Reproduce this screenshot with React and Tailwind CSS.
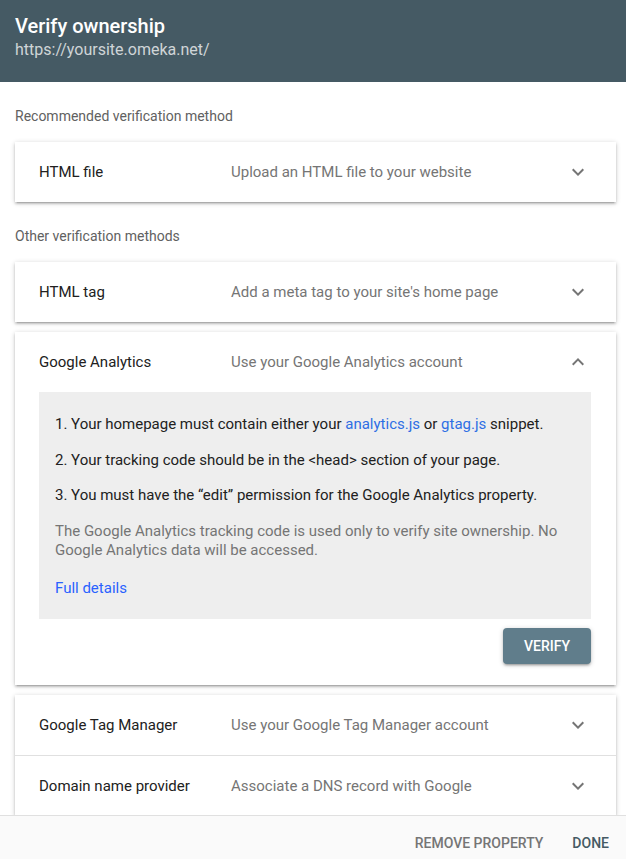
import React from "react";

const shadow =
  "shadow-[0_2px_2px_0_rgba(0,0,0,0.14),0_3px_1px_-2px_rgba(0,0,0,0.12),0_1px_5px_0_rgba(0,0,0,0.2)]";

function ExpandMore() {
  return (
    <svg width="24" height="24" viewBox="0 0 24 24" fill="#757575">
      <path d="M16.59 8.59L12 13.17 7.41 8.59 6 10l6 6 6-6z" />
    </svg>
  );
}
function ExpandLess() {
  return (
    <svg width="24" height="24" viewBox="0 0 24 24" fill="#757575">
      <path d="M12 8l-6 6 1.41 1.41L12 10.83l4.59 4.58L18 14z" />
    </svg>
  );
}

function Row({ title, desc, open }) {
  return (
    <div className="flex h-[60px] items-center pl-6 pr-[26px]">
      <div className="w-[192px] shrink-0 text-[15px] text-[#212121]">{title}</div>
      <div className="flex-1 text-[15px] text-[#757575]">{desc}</div>
      {open ? <ExpandLess /> : <ExpandMore />}
    </div>
  );
}

export default function App() {
  return (
    <div
      className="flex h-[859px] flex-col overflow-hidden bg-white"
      style={{ fontFamily: "Roboto, 'Noto Sans', sans-serif" }}
    >
      <header className="h-[82px] shrink-0 bg-[#455a64] px-[15px] pt-[13px]">
        <div className="text-[20px] font-medium leading-[26px] text-white">Verify ownership</div>
        <div className="text-[16px] leading-[22px] text-white/75">https://yoursite.omeka.net/</div>
      </header>

      <main className="flex-1 overflow-hidden pl-[15px] pr-[10px]">
        <div className="pt-6 pb-4 text-[14px] leading-5 text-[#616161]">
          Recommended verification method
        </div>
        <div className={`bg-white ${shadow}`}>
          <Row title="HTML file" desc="Upload an HTML file to your website" />
        </div>

        <div className="pt-6 pb-4 text-[14px] leading-5 text-[#616161]">
          Other verification methods
        </div>

        <div className={`bg-white ${shadow}`}>
          <Row title="HTML tag" desc="Add a meta tag to your site's home page" />
        </div>

        <div className={`mt-[10px] bg-white ${shadow}`}>
          <Row title="Google Analytics" desc="Use your Google Analytics account" open />
          <div className="pl-6 pr-[25px] pb-[21px]">
            <div className="bg-[#eeeeee] px-4 pt-[22px] pb-[21px] text-[15px] leading-5 text-[#212121]">
              <p>
                1. Your homepage must contain either your{" "}
                <span className="text-[#2f6fe4]">analytics.js</span> or{" "}
                <span className="text-[#2f6fe4]">gtag.js</span> snippet.
              </p>
              <p className="mt-4">2. Your tracking code should be in the &lt;head&gt; section of your page.</p>
              <p className="mt-[15px]">3. You must have the “edit” permission for the Google Analytics property.</p>
              <p className="mt-[17px] leading-[19px] text-[#757575]">
                The Google Analytics tracking code is used only to verify site ownership. No Google Analytics
                data will be accessed.
              </p>
              <p className="mt-[18px] text-[#2962ff]">Full details</p>
            </div>
            <div className="flex justify-end pt-[9px]">
              <button
                className={`h-9 w-[88px] rounded-[4px] bg-[#607d8b] text-[14px] font-medium text-white ${shadow}`}
              >
                VERIFY
              </button>
            </div>
          </div>
        </div>

        <div className={`mt-[10px] bg-white ${shadow}`}>
          <Row title="Google Tag Manager" desc="Use your Google Tag Manager account" />
          <div className="border-t border-[#e0e0e0]">
            <Row title="Domain name provider" desc="Associate a DNS record with Google" />
          </div>
        </div>
      </main>

      <footer className="flex h-[44px] shrink-0 items-start justify-end gap-[29px] border-t border-[#e0e0e0] bg-[#fafafa] pt-[17px] pr-[17px] text-[14px] font-medium leading-5">
        <span className="text-[#757575]">REMOVE PROPERTY</span>
        <span className="text-[#455a64]">DONE</span>
      </footer>
    </div>
  );
}
